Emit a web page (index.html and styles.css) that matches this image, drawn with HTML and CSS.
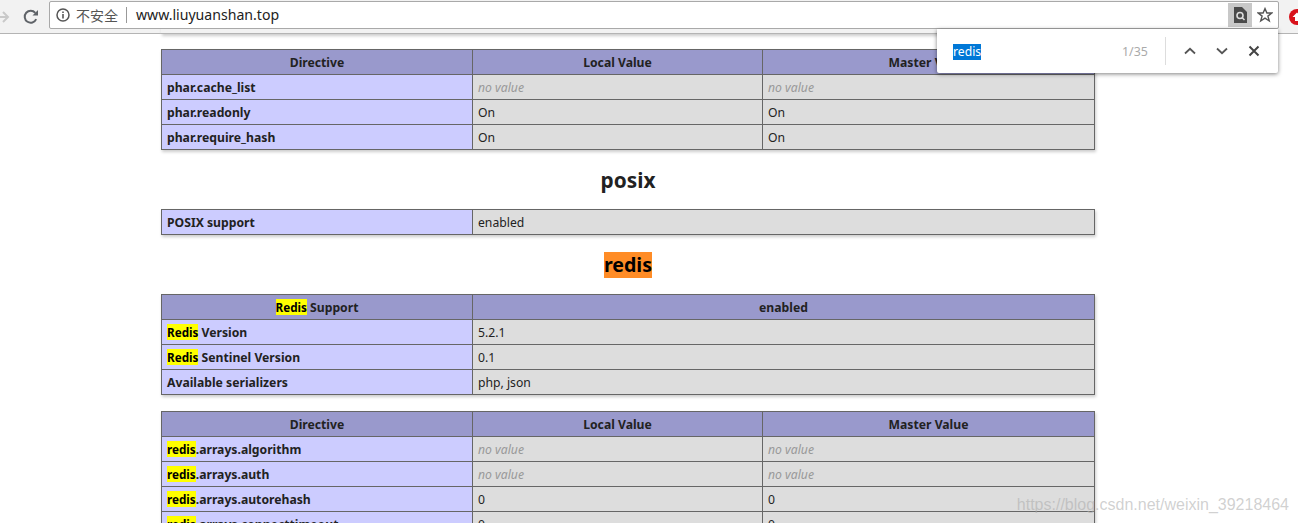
FILE: index.html
```html
<!DOCTYPE html>
<html>
<head>
  <meta charset="utf-8" />
  <title>phpinfo()</title>
  <link rel="stylesheet" href="styles.css">
</head>
<body>
  <div class="toolbar">
    <svg class="nav-icon back" width="10" height="16" viewBox="0 0 10 16"><path d="M-3 8H8M3 3L8 8L3 13" fill="none" stroke="#c9c9c9" stroke-width="2"/></svg>
    <svg class="nav-icon reload" width="16" height="16" viewBox="0 0 16 16"><path d="M13.2 10.2A6 6 0 1 1 12.3 3.8" fill="none" stroke="#5f6368" stroke-width="2"/><path d="M9.5 6.5H15V1Z" fill="#5f6368"/></svg>
    <div class="address">
      <svg class="info-icon" width="14" height="14" viewBox="0 0 14 14"><circle cx="7" cy="7" r="6" fill="none" stroke="#555" stroke-width="1.5"/><path d="M6.2 3.4h1.6v1.6H6.2zM6.2 6h1.6v4.6H6.2z" fill="#555"/></svg>
      <span class="insecure">不安全</span>
      <span class="address-sep"></span>
      <span class="url">www.liuyuanshan.top</span>
      <span class="find-btn">
        <svg width="14" height="16" viewBox="0 0 14 16"><path d="M1 0H9L14 5V16H1Z" fill="#4a4a4a"/><circle cx="7" cy="8.5" r="3" fill="none" stroke="#ddd" stroke-width="1.6"/><path d="M9 10.5L11.5 13" stroke="#ddd" stroke-width="1.6"/></svg>
      </span>
      <svg class="star" width="16" height="16" viewBox="0 0 16 16"><path d="M8 1.6L9.9 6H14.8L10.9 9.1L12.3 14L8 11.2L3.7 14L5.1 9.1L1.2 6H6.1Z" fill="none" stroke="#555" stroke-width="1.4"/></svg>
    </div>
    <svg class="ext-icon" width="16" height="16" viewBox="0 0 16 16"><circle cx="8" cy="8" r="8" fill="#d8111a"/><path d="M8 3.5L12.5 8H10V12H6V8H3.5Z" fill="#fff"/></svg>
  </div>

  <div class="find-panel">
    <span class="find-text">redis</span>
    <span class="find-count">1/35</span>
    <span class="find-sep"></span>
    <svg class="find-arrow" width="14" height="14" viewBox="0 0 14 14"><path d="M2 9.5L7 4.8L12 9.5" fill="none" stroke="#555" stroke-width="1.8"/></svg>
    <svg class="find-arrow" width="14" height="14" viewBox="0 0 14 14"><path d="M2 4.5L7 9.2L12 4.5" fill="none" stroke="#555" stroke-width="1.8"/></svg>
    <svg class="find-arrow" width="14" height="14" viewBox="0 0 14 14"><path d="M2.5 2.5L11.5 11.5M11.5 2.5L2.5 11.5" fill="none" stroke="#444" stroke-width="2"/></svg>
  </div>

  <div class="page">
    <div class="prev-shadow"></div>
    <table class="info">
      <tr><th class="c1">Directive</th><th class="c2">Local Value</th><th>Master Value</th></tr>
      <tr><td class="e">phar.cache_list</td><td class="v"><i>no value</i></td><td class="v"><i>no value</i></td></tr>
      <tr><td class="e">phar.readonly</td><td class="v">On</td><td class="v">On</td></tr>
      <tr><td class="e">phar.require_hash</td><td class="v">On</td><td class="v">On</td></tr>
    </table>

    <h2>posix</h2>
    <table class="info">
      <tr><td class="e c1">POSIX support</td><td class="v">enabled</td></tr>
    </table>

    <h2 class="tight"><span class="current">redis</span></h2>
    <table class="info">
      <tr><th class="c1"><mark>Redis</mark> Support</th><th>enabled</th></tr>
      <tr><td class="e"><mark>Redis</mark> Version</td><td class="v">5.2.1</td></tr>
      <tr><td class="e"><mark>Redis</mark> Sentinel Version</td><td class="v">0.1</td></tr>
      <tr><td class="e">Available serializers</td><td class="v">php, json</td></tr>
    </table>

    <table class="info">
      <tr><th class="c1">Directive</th><th class="c2">Local Value</th><th>Master Value</th></tr>
      <tr><td class="e"><mark>redis</mark>.arrays.algorithm</td><td class="v"><i>no value</i></td><td class="v"><i>no value</i></td></tr>
      <tr><td class="e"><mark>redis</mark>.arrays.auth</td><td class="v"><i>no value</i></td><td class="v"><i>no value</i></td></tr>
      <tr><td class="e"><mark>redis</mark>.arrays.autorehash</td><td class="v">0</td><td class="v">0</td></tr>
      <tr><td class="e"><mark>redis</mark>.arrays.connecttimeout</td><td class="v">0</td><td class="v">0</td></tr>
    </table>
  </div>

  <div class="watermark">https://blog.csdn.net/weixin_39218464</div>
</body>
</html>
```

FILE: styles.css
```css
html, body {
  height: 100%;
}
body {
  margin: 0;
  padding: 0;
  overflow: hidden;
  background-color: #fff;
  color: #222;
  font-family: "Noto Sans", "Noto Sans CJK SC", sans-serif;
  font-size: 12.2px;
}
.toolbar {
  display: flex;
  align-items: center;
  height: 33px;
  background-color: #f2f2f2;
  border-bottom: 1px solid #b4b4b4;
}
.nav-icon {
  flex: none;
}
.back {
  margin-right: 13px;
}
.reload {
  margin-right: 10px;
}
.address {
  display: flex;
  flex: none;
  align-items: center;
  width: 1230px;
  height: 28px;
  margin-top: -4px;
  box-sizing: border-box;
  background-color: #fff;
  border: 1px solid #a9a9a9;
  border-radius: 2px;
}
.info-icon {
  margin-left: 6px;
  flex: none;
}
.insecure {
  margin-left: 6px;
  font-size: 14px;
  color: #555;
}
.address-sep {
  width: 1px;
  height: 16px;
  margin: 0 9px 0 8px;
  background-color: #999;
}
.url {
  flex: 1;
  font-size: 14.1px;
  color: #222;
}
.find-btn {
  display: flex;
  align-items: center;
  justify-content: center;
  width: 24px;
  height: 24px;
  background-color: #c8c8c8;
}
.star {
  margin: 0 5px;
}
.ext-icon {
  margin-left: 10px;
  flex: none;
}
.find-panel {
  position: absolute;
  left: 937px;
  top: 29px;
  width: 341px;
  height: 44px;
  display: flex;
  align-items: center;
  box-sizing: border-box;
  padding-left: 16px;
  background-color: #fff;
  border-radius: 0 0 2px 2px;
  box-shadow: 0 1px 4px rgba(0, 0, 0, 0.5);
}
.find-text {
  flex: none;
  width: 28px;
  height: 16px;
  margin-top: 1px;
  line-height: 16px;
  background-color: #0078d7;
  color: #fff;
  font-size: 12.2px;
}
.find-count {
  flex: none;
  margin-left: 141px;
  width: 26px;
  color: #aaa;
  font-size: 12.4px;
}
.find-sep {
  flex: none;
  width: 1px;
  height: 28px;
  margin: 0 17px;
  background-color: #ddd;
}
.find-arrow {
  flex: none;
  margin-right: 18px;
}
.find-arrow:last-child {
  margin-right: 0;
}
.page {
  padding-left: 161px;
}
.prev-shadow {
  width: 934px;
  height: 15px;
  margin-top: -15px;
  box-shadow: 1px 2px 3px #ccc;
}
.prev-shadow + .info {
  margin-top: 15px;
}
.info {
  width: 934px;
  table-layout: fixed;
  border-collapse: collapse;
  margin-bottom: 16px;
  box-shadow: 1px 2px 3px #ccc;
}
.info th, .info td {
  height: 25px;
  padding: 2px 5px 0;
  box-sizing: border-box;
  border: 1px solid #666;
  line-height: 16px;
  white-space: nowrap;
  overflow: hidden;
}
.info th {
  background-color: #9999cc;
  text-align: center;
  font-weight: bold;
}
.c1 {
  width: 311px;
}
.c2 {
  width: 290px;
}
.e {
  background-color: #ccccff;
  font-weight: bold;
}
.v {
  background-color: #ddd;
}
.v i {
  color: #999;
}
mark {
  background-color: #ffff00;
  color: #000;
  font-size: 11.7px;
  line-height: 1;
}
h2 {
  width: 934px;
  margin: 17px 0 16px;
  font-size: 20.8px;
  line-height: 26px;
  font-weight: bold;
  text-align: center;
}
h2.tight {
  margin-top: 16px;
}
.current {
  display: inline-block;
  background-color: #ff8c26;
  color: #000;
  font-size: 19.6px;
}
.watermark {
  position: absolute;
  right: 9px;
  top: 496px;
  color: rgba(170, 170, 170, 0.55);
  font-family: "Liberation Sans", sans-serif;
  font-size: 16px;
}
```
